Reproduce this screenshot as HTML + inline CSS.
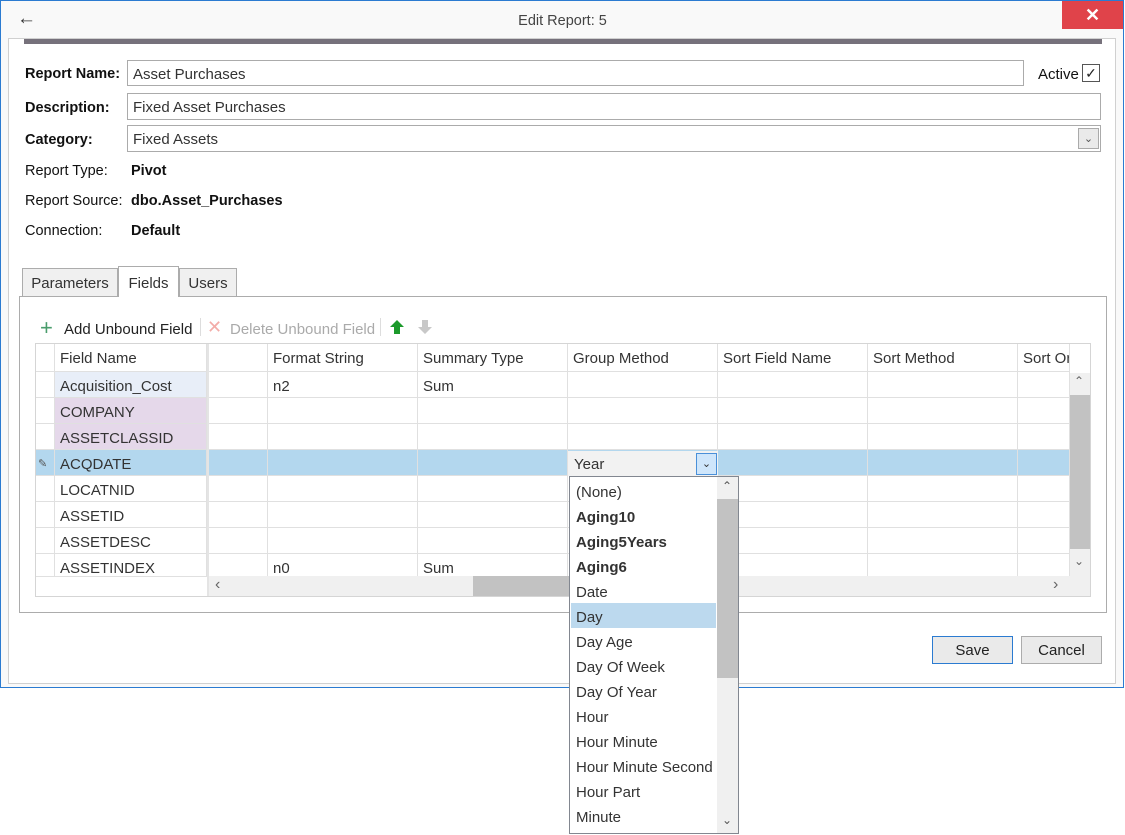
<!DOCTYPE html>
<html><head><meta charset="utf-8"><style>
*{box-sizing:border-box;margin:0;padding:0}
body{width:1125px;height:835px;position:relative;background:#fff;font-family:"Liberation Sans",sans-serif;font-size:15px;color:#222;overflow:hidden}
.a{position:absolute}
.lbl{position:absolute;left:25px;font-size:14.5px;color:#111}
.b{font-weight:bold}
.inp{position:absolute;border:1px solid #ababab;background:#fff;padding-left:5px;line-height:27px;color:#333}
.cell{position:absolute;border-right:1px solid #e0e0e0;border-bottom:1px solid #e0e0e0;height:26px;line-height:29px;padding-left:5px;color:#333;white-space:nowrap;overflow:hidden}
.it{position:absolute;left:6px;height:25px;line-height:27px;color:#333}
</style></head><body>
<div class="a" style="left:0;top:0;width:1124px;height:688px;border:1px solid #2b7bd1;background:#f9f9f9"></div>
<div class="a" style="left:17px;top:8px;font-size:19px;color:#333">&#8592;</div>
<div class="a" style="left:0;top:13px;width:1125px;text-align:center;color:#444;font-size:14.5px">Edit Report: 5</div>
<div class="a" style="left:1062px;top:1px;width:61px;height:28px;background:#e0434a;color:#fff;text-align:center;line-height:28px;font-size:18px;font-weight:bold">&#10005;</div>
<div class="a" style="left:8px;top:38px;width:1108px;height:646px;border:1px solid #d0d0d0;background:#fff"></div>
<div class="a" style="left:24px;top:39px;width:1078px;height:5px;background:#76717b"></div>

<div class="lbl b" style="top:66px">Report Name:</div>
<div class="inp" style="left:127px;top:60px;width:897px;height:26px">Asset Purchases</div>
<div class="a" style="left:1038px;top:66px;color:#111">Active</div>
<div class="a" style="left:1082px;top:64px;width:18px;height:18px;border:1px solid #555;text-align:center;line-height:16px;font-size:14px">&#10003;</div>
<div class="lbl b" style="top:100px">Description:</div>
<div class="inp" style="left:127px;top:93px;width:974px;height:27px">Fixed Asset Purchases</div>
<div class="lbl b" style="top:132px">Category:</div>
<div class="inp" style="left:127px;top:125px;width:974px;height:27px">Fixed Assets</div>
<div class="a" style="left:1078px;top:128px;width:21px;height:21px;border:1px solid #aaa;background:#eaeaea;text-align:center;line-height:20px;font-size:11px;color:#555">&#8964;</div>
<div class="lbl" style="top:163px">Report Type:</div><div class="a b" style="left:131px;top:163px;color:#111;font-size:14.5px">Pivot</div>
<div class="lbl" style="top:193px">Report Source:</div><div class="a b" style="left:131px;top:193px;color:#111;font-size:14.5px">dbo.Asset_Purchases</div>
<div class="lbl" style="top:223px">Connection:</div><div class="a b" style="left:131px;top:223px;color:#111;font-size:14.5px">Default</div>

<div class="a" style="left:19px;top:296px;width:1088px;height:317px;border:1px solid #acacac"></div>
<div class="a" style="left:22px;top:268px;width:96px;height:29px;border:1px solid #acacac;background:#f0f0f0;text-align:center;line-height:29px;color:#333">Parameters</div>
<div class="a" style="left:118px;top:266px;width:61px;height:31px;border:1px solid #acacac;border-bottom:none;background:#fff;text-align:center;line-height:33px;color:#333">Fields</div>
<div class="a" style="left:179px;top:268px;width:58px;height:29px;border:1px solid #acacac;background:#f0f0f0;text-align:center;line-height:29px;color:#333">Users</div>

<div class="a" style="left:40px;top:315px;font-size:22px;color:#4a9d6c">+</div>
<div class="a" style="left:64px;top:321px;color:#222">Add Unbound Field</div>
<div class="a" style="left:200px;top:318px;width:1px;height:18px;background:#ddd"></div>
<div class="a" style="left:207px;top:317px;font-size:18px;color:#f3aca8">&#10005;</div>
<div class="a" style="left:230px;top:321px;color:#aaa">Delete Unbound Field</div>
<div class="a" style="left:380px;top:318px;width:1px;height:18px;background:#ddd"></div>
<svg class="a" style="left:389px;top:319px" width="16" height="16"><path d="M8 1 L15 8 H11 V15 H5 V8 H1 Z" fill="#1c9a2b"/></svg>
<svg class="a" style="left:417px;top:319px" width="16" height="16"><path d="M8 15 L15 8 H11 V1 H5 V8 H1 Z" fill="#c8c8c8"/></svg>

<div class="a" style="left:35px;top:343px;width:1056px;height:254px;border:1px solid #d5d5d5;background:#fff"></div>
<div id="g"></div>
<script>
(function(){
var cols=[[55,152],[209,59],[268,150],[418,150],[568,150],[718,150],[868,150],[1018,52]];
var heads=["Field Name","","Format String","Summary Type","Group Method","Sort Field Name","Sort Method","Sort Or"];
var rows=[["Acquisition_Cost","","n2","Sum"],["COMPANY"],["ASSETCLASSID"],["ACQDATE"],["LOCATNID"],["ASSETID"],["ASSETDESC"],["ASSETINDEX","","n0","Sum"]];
var h="";
h+='<div class="cell" style="left:36px;top:344px;width:19px;height:28px"></div>';
for(var c=0;c<8;c++){h+='<div class="cell" style="left:'+cols[c][0]+'px;top:344px;width:'+cols[c][1]+'px;height:28px;line-height:30px">'+heads[c]+'</div>';}
for(var r=0;r<8;r++){var ty=372+r*26;
 h+='<div class="cell" style="left:36px;top:'+ty+'px;width:19px;'+(r==3?'background:#b3d7ee':'')+'"></div>';
 for(var c=0;c<8;c++){var bg="";if(c==0){bg=r==0?"#e8eef8":(r<3?"#e5d8ea":"");}if(r==3)bg="#b3d7ee";
 h+='<div class="cell" style="left:'+cols[c][0]+'px;top:'+ty+'px;width:'+cols[c][1]+'px;'+(bg?'background:'+bg+';':'')+'">'+(rows[r][c]||"")+'</div>';}}
h+='<div class="a" style="left:207px;top:344px;width:2px;height:252px;border-left:1px solid #e4e4e4;border-right:1px solid #e4e4e4;background:#fff"></div>';
document.getElementById("g").innerHTML=h;
})();
</script>
<div class="a" style="left:38px;top:457px;font-size:11px;color:#555">&#9998;</div>
<div class="a" style="left:568px;top:451px;width:150px;height:25px;background:#f2f2f2;padding-left:6px;line-height:28px;color:#333">Year</div>
<div class="a" style="left:696px;top:453px;width:21px;height:22px;border:1px solid #4a90d9;background:#cfe6fb;text-align:center;line-height:20px;font-size:11px;color:#333">&#8964;</div>
<div class="a" style="left:1070px;top:373px;width:20px;height:203px;background:#f0f0f0"></div>
<div class="a" style="left:1070px;top:395px;width:20px;height:154px;background:#c2c2c2"></div>
<div class="a" style="left:1074px;top:374px;font-size:12px;color:#666">&#8963;</div>
<div class="a" style="left:1074px;top:554px;font-size:12px;color:#666">&#8964;</div>
<div class="a" style="left:36px;top:576px;width:171px;height:20px;background:#fff;border-top:1px solid #e0e0e0"></div>
<div class="a" style="left:209px;top:576px;width:861px;height:20px;background:#f0f0f0"></div>
<div class="a" style="left:473px;top:576px;width:100px;height:20px;background:#c2c2c2"></div>
<div class="a" style="left:215px;top:576px;font-size:16px;color:#666">&#8249;</div>
<div class="a" style="left:1053px;top:576px;font-size:16px;color:#666">&#8250;</div>
<div class="a" style="left:1070px;top:576px;width:20px;height:20px;background:#f0f0f0"></div>

<div class="a" style="left:932px;top:636px;width:81px;height:28px;border:1px solid #2b7bd1;background:#eaeaea;text-align:center;line-height:28px;color:#222">Save</div>
<div class="a" style="left:1021px;top:636px;width:81px;height:28px;border:1px solid #acacac;background:#eaeaea;text-align:center;line-height:28px;color:#222">Cancel</div>

<div class="a" style="left:569px;top:476px;width:170px;height:358px;border:1px solid #828790;background:#fff">
<div class="a" style="left:1px;top:126px;width:145px;height:25px;background:#bcd9ee"></div>
<div class="it" style="top:2px">(None)</div>
<div class="it b" style="top:27px">Aging10</div>
<div class="it b" style="top:52px">Aging5Years</div>
<div class="it b" style="top:77px">Aging6</div>
<div class="it" style="top:102px">Date</div>
<div class="it" style="top:127px">Day</div>
<div class="it" style="top:152px">Day Age</div>
<div class="it" style="top:177px">Day Of Week</div>
<div class="it" style="top:202px">Day Of Year</div>
<div class="it" style="top:227px">Hour</div>
<div class="it" style="top:252px">Hour Minute</div>
<div class="it" style="top:277px">Hour Minute Second</div>
<div class="it" style="top:302px">Hour Part</div>
<div class="it" style="top:327px">Minute</div>
<div class="a" style="left:147px;top:0;width:21px;height:356px;background:#f0f0f0"></div>
<div class="a" style="left:147px;top:22px;width:21px;height:179px;background:#c2c2c2"></div>
<div class="a" style="left:152px;top:2px;font-size:12px;color:#555">&#8963;</div>
<div class="a" style="left:152px;top:336px;font-size:12px;color:#555">&#8964;</div>
</div>
</body></html>
